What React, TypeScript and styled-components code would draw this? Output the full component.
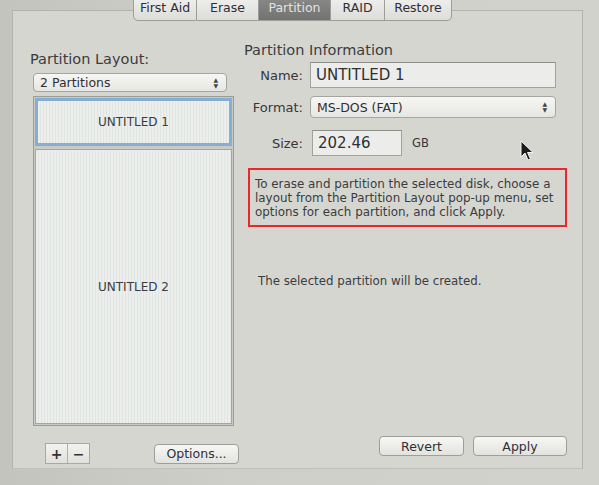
import React from "react";
import styled, { createGlobalStyle } from "styled-components";

const Global = createGlobalStyle`
  html, body { margin: 0; padding: 0; }
  body {
    width: 599px; height: 485px; overflow: hidden;
    background: #c8c8c3;
    font-family: "DejaVu Sans", "Liberation Sans", sans-serif;
    color: #34363a;
  }
`;

const Page = styled.div`
  position: relative;
  width: 599px;
  height: 485px;
  background: linear-gradient(90deg, #c4c4bf 0%, #cfcfca 40%, #d2d2cd 100%);
  overflow: hidden;
`;

const TabBar = styled.div`
  display: flex;
  margin-left: 133px;
  margin-top: -4px;
  height: 25px;
  position: relative;
  z-index: 2;
`;

const Tab = styled.div<{ $active?: boolean; $w: number }>`
  width: ${(p) => p.$w}px;
  display: flex;
  align-items: flex-end;
  justify-content: center;
  padding-bottom: 5px;
  box-sizing: border-box;
  font-size: 12.5px;
  background: ${(p) => (p.$active ? "linear-gradient(#8a8a88, #727270)" : "linear-gradient(#f0f0ee, #dcdcd9)")};
  color: ${(p) => (p.$active ? "#e2e2e0" : "#2e3034")};
  border: 1px solid #9d9d99;
  border-left: none;
  &:first-child { border-left: 1px solid #9d9d99; border-radius: 0 0 0 5px; }
  &:last-child { border-radius: 0 0 5px 0; }
`;

const Panel = styled.div`
  margin: -11px 0 0 12px;
  width: 571px;
  height: 459px;
  box-sizing: border-box;
  border: 1px solid #b3b3ae;
  border-bottom-color: #c0c0bb;
  background: #d6d6d1;
  display: flex;
  padding: 0 0 0 17px;
`;

const LeftCol = styled.div`
  width: 212px;
  display: flex;
  flex-direction: column;
`;

const RightCol = styled.div`
  flex: 1;
  display: flex;
  flex-direction: column;
  padding-left: 2px;
  padding-right: 15px;
`;

const Heading = styled.div<{ $top: number }>`
  font-size: 14.5px;
  margin-top: ${(p) => p.$top}px;
  color: #3a3c40;
`;

const Popup = styled.div<{ $w?: string }>`
  height: 19px;
  box-sizing: border-box;
  border: 1px solid #a5a5a1;
  border-radius: 4px;
  background: linear-gradient(#f6f6f4, #e6e6e3);
  display: flex;
  align-items: center;
  justify-content: space-between;
  padding: 0 8px 0 6px;
  font-size: 12.5px;
  color: #2e3034;
  width: ${(p) => p.$w || "auto"};
`;

const Arrows = styled.span`
  display: flex;
  flex-direction: column;
  font-size: 6px;
  line-height: 6px;
  color: #444;
`;

const Map = styled.div`
  margin: 4px 0 0 3px;
  width: 201px;
  height: 330px;
  box-sizing: border-box;
  border: 1px solid #9c9c98;
  background: #c9cac6;
  display: flex;
  flex-direction: column;
  gap: 3px;
  padding: 1px;
`;

const Part = styled.div<{ $sel?: boolean; $h?: number }>`
  ${(p) => (p.$h ? `height: ${p.$h}px;` : "flex: 1;")}
  box-sizing: border-box;
  border: ${(p) => (p.$sel ? "3px solid #86aed2" : "1px solid #a5a5a1")};
  background: repeating-linear-gradient(90deg, #eceeec 0px, #eceeec 2px, #e1e6e5 2px, #e1e6e5 3px);
  display: flex;
  align-items: center;
  justify-content: center;
  font-size: 12px;
  color: #3a3c40;
`;

const LeftBottom = styled.div`
  display: flex;
  align-items: center;
  margin-top: 17px;
  padding-left: 15px;
`;

const PlusMinus = styled.div`
  display: flex;
  border: 1px solid #a8a8a4;
  background: linear-gradient(#f2f2f0, #e0e0dd);
  height: 19px;
`;

const PMButton = styled.div`
  width: 21px;
  display: flex;
  align-items: center;
  justify-content: center;
  font-size: 14px;
  font-weight: bold;
  color: #333;
  & + & { border-left: 1px solid #b0b0ac; }
`;

const Button = styled.div<{ $w: number; $ml?: number }>`
  width: ${(p) => p.$w}px;
  height: 20px;
  margin-left: ${(p) => p.$ml || 0}px;
  box-sizing: border-box;
  border: 1px solid #9e9e9a;
  border-radius: 4px;
  background: linear-gradient(#f7f7f5, #e2e2df);
  display: flex;
  align-items: center;
  justify-content: center;
  font-size: 12.5px;
  color: #2e3034;
`;

const FormRow = styled.div<{ $top: number }>`
  display: flex;
  align-items: center;
  margin-top: ${(p) => p.$top}px;
`;

const Label = styled.div`
  width: 59px;
  text-align: right;
  padding-right: 7px;
  font-size: 13px;
  color: #34363a;
`;

const Field = styled.div<{ $w: number; $h: number }>`
  width: ${(p) => p.$w}px;
  height: ${(p) => p.$h}px;
  box-sizing: border-box;
  border: 1px solid #a2a29e;
  border-top-color: #8e8e8a;
  background: #ecedeb;
  display: flex;
  align-items: center;
  padding-left: 5px;
  font-size: 15px;
  color: #2e3034;
`;

const Unit = styled.div`
  margin-left: 10px;
  font-size: 11.5px;
  color: #34363a;
`;

const InfoBox = styled.div`
  margin-top: 12px;
  margin-left: 4px;
  width: 319px;
  box-sizing: border-box;
  border: 2px solid #e8282c;
  padding: 7px 4px 6px 5px;
  font-size: 11.9px;
  line-height: 14px;
  color: #3a3c40;
`;

const Status = styled.div`
  margin-top: 47px;
  margin-left: 14px;
  font-size: 11.8px;
  color: #3a3c40;
`;

const RightBottom = styled.div`
  margin-top: auto;
  margin-bottom: 12px;
  display: flex;
  justify-content: flex-end;
  gap: 9px;
`;

const Cursor = styled.svg`
  position: absolute;
  left: 520px;
  top: 140px;
`;

export default function App() {
  return (
    <Page>
      <Global />
      <TabBar>
        <Tab $w={64}>First Aid</Tab>
        <Tab $w={62}>Erase</Tab>
        <Tab $w={72} $active>Partition</Tab>
        <Tab $w={54}>RAID</Tab>
        <Tab $w={67}>Restore</Tab>
      </TabBar>
      <Panel>
        <LeftCol>
          <Heading $top={40}>Partition Layout:</Heading>
          <Popup $w="194px" style={{ marginTop: 6, marginLeft: 3 }}>
            <span>2 Partitions</span>
            <Arrows>
              <span>▲</span>
              <span>▼</span>
            </Arrows>
          </Popup>
          <Map>
            <Part $sel $h={48}>UNTITLED 1</Part>
            <Part>UNTITLED 2</Part>
          </Map>
          <LeftBottom>
            <PlusMinus>
              <PMButton>+</PMButton>
              <PMButton>−</PMButton>
            </PlusMinus>
            <Button $w={85} $ml={64}>Options...</Button>
          </LeftBottom>
        </LeftCol>
        <RightCol>
          <Heading $top={31}>Partition Information</Heading>
          <FormRow $top={4}>
            <Label>Name:</Label>
            <Field $w={246} $h={26}>UNTITLED 1</Field>
          </FormRow>
          <FormRow $top={8}>
            <Label>Format:</Label>
            <Popup $w="246px" style={{ height: 22 }}>
              <span>MS-DOS (FAT)</span>
              <Arrows>
                <span>▲</span>
                <span>▼</span>
              </Arrows>
            </Popup>
          </FormRow>
          <FormRow $top={12}>
            <Label style={{ paddingRight: 9 }}>Size:</Label>
            <Field $w={90} $h={26}>202.46</Field>
            <Unit>GB</Unit>
          </FormRow>
          <InfoBox>
            To erase and partition the selected disk, choose a layout from the Partition Layout pop-up menu, set
            options for each partition, and click Apply.
          </InfoBox>
          <Status>The selected partition will be created.</Status>
          <RightBottom>
            <Button $w={85}>Revert</Button>
            <Button $w={94}>Apply</Button>
          </RightBottom>
        </RightCol>
      </Panel>
      <Cursor width="14" height="22" viewBox="0 0 14 22">
        <path d="M1 1 L1 17 L5 13 L8 20 L10.5 19 L7.5 12.5 L13 12.5 Z" fill="#1c1c1c" stroke="#f4f4f4" strokeWidth="1" />
      </Cursor>
    </Page>
  );
}
